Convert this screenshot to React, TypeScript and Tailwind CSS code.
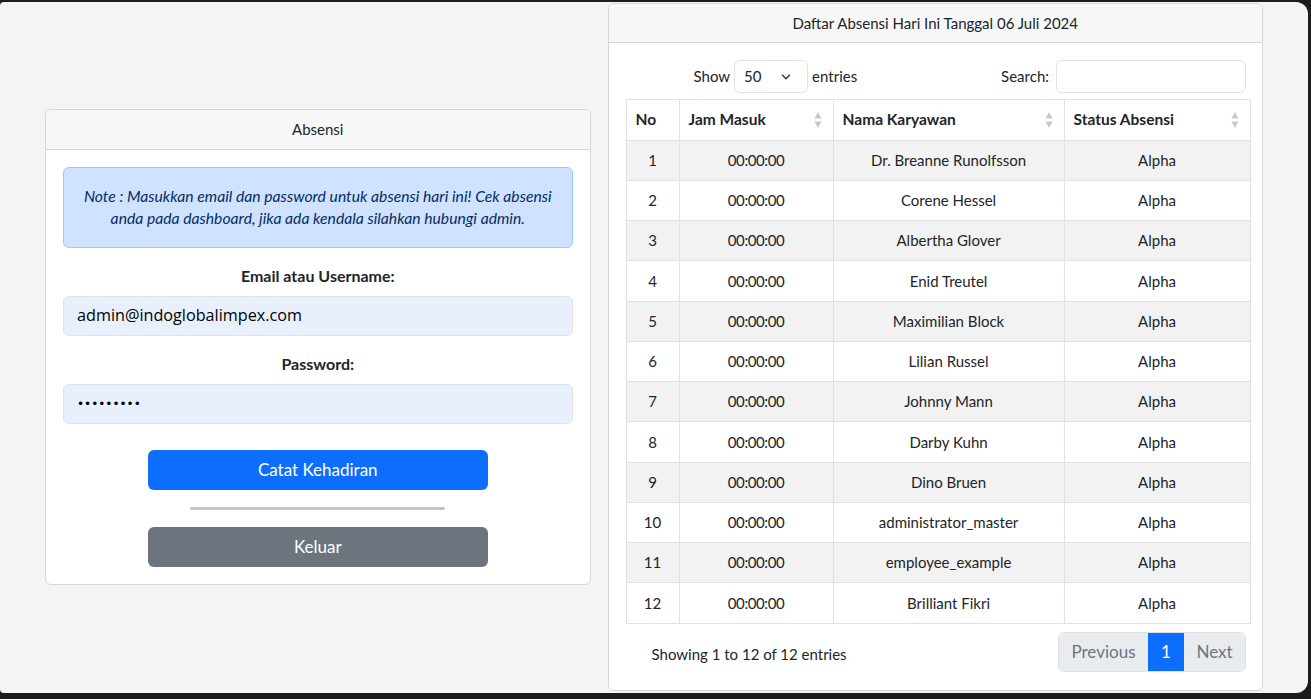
import { ChevronDown } from 'lucide-react';

const rows = [
  'Dr. Breanne Runolfsson',
  'Corene Hessel',
  'Albertha Glover',
  'Enid Treutel',
  'Maximilian Block',
  'Lilian Russel',
  'Johnny Mann',
  'Darby Kuhn',
  'Dino Bruen',
  'administrator_master',
  'employee_example',
  'Brilliant Fikri',
];

function SortIcon() {
  return (
    <svg className="w-[8px] h-[18px]" viewBox="0 0 8 18" fill="#c8c8c8">
      <path d="M4 1 L7.5 7.5 L0.5 7.5 Z" />
      <path d="M4 17 L7.5 10.5 L0.5 10.5 Z" />
    </svg>
  );
}

function AbsensiCard() {
  return (
    <div className="mb-[2px] w-[546px] bg-white border border-[#d6d6d6] rounded-[6px] overflow-hidden">
      <div className="h-[40px] flex items-center justify-center bg-[#f7f7f7] border-b border-[#d6d6d6] text-[15px] text-[#212529]">
        Absensi
      </div>
      <div className="px-[17px] pt-[17px] pb-[17px] flex flex-col">
        <div className="h-[81px] flex items-center justify-center px-4 bg-[#cfe2ff] border border-[#9ec5fe] rounded-[6px] text-center italic text-[15.7px] leading-[22px] text-[#052c65]">
          Note : Masukkan email dan password untuk absensi hari ini! Cek absensi anda pada dashboard, jika ada kendala silahkan hubungi admin.
        </div>
        <label className="mt-[17px] h-[22px] flex items-center justify-center font-bold text-[16px] text-[#212529]">
          Email atau Username:
        </label>
        <div className="mt-[9px] h-[40px] flex items-center px-[13px] bg-[#e8f0fe] border border-[#dee2e6] rounded-[6px] text-[16.2px] text-black font-['Open_Sans',sans-serif]">
          admin@indoglobalimpex.com
        </div>
        <label className="mt-[17px] h-[22px] flex items-center justify-center font-bold text-[16px] text-[#212529]">
          Password:
        </label>
        <div className="mt-[9px] h-[40px] flex items-center px-[13px] bg-[#e8f0fe] border border-[#dee2e6] rounded-[6px] text-[12px] text-black font-['DejaVu_Sans',sans-serif]">
          •••••••••
        </div>
        <button className="mt-[26px] self-center w-[340px] h-[40px] bg-[#0d6efd] rounded-[6px] text-white text-[17px]">
          Catat Kehadiran
        </button>
        <div className="mt-[17px] self-center w-[255px] h-[3px] bg-[#c4c4c4] rounded-full" />
        <button className="mt-[17px] self-center w-[340px] h-[40px] bg-[#6c757d] rounded-[6px] text-white text-[17px]">
          Keluar
        </button>
      </div>
    </div>
  );
}

function DaftarCard() {
  return (
    <div className="self-start mt-[1px] w-[656px] h-[688px] bg-white border border-[#d6d6d6] rounded-[6px] overflow-hidden flex flex-col">
      <div className="h-[39px] shrink-0 flex items-center justify-center bg-[#f7f7f7] border-b border-[#d6d6d6] text-[15px] text-[#212529]">
        Daftar Absensi Hari Ini Tanggal 06 Juli 2024
      </div>
      <div className="pt-[17px] pl-[17px] pr-[13px] flex flex-col text-[#212529]">
        {/* controls */}
        <div className="h-[33px] flex items-center text-[15px]">
          <div className="pl-[68px] flex items-center">
            <span>Show</span>
            <div className="ml-[4px] w-[74px] h-[33px] flex items-center justify-between pl-[9px] pr-[14px] border border-[#dee2e6] rounded-[6px]">
              <span>50</span>
              <ChevronDown className="w-[14px] h-[14px] text-[#343a40]" strokeWidth={2.5} />
            </div>
            <span className="ml-[4px]">entries</span>
          </div>
          <div className="ml-auto mr-[3px] flex items-center">
            <span>Search:</span>
            <div className="ml-[7px] w-[190px] h-[33px] border border-[#dee2e6] rounded-[6px]" />
          </div>
        </div>

        {/* table */}
        <table className="mt-[6px] w-[624px] border-collapse text-[15px] table-fixed">
          <colgroup>
            <col className="w-[53px]" />
            <col className="w-[154px]" />
            <col className="w-[231px]" />
            <col className="w-[186px]" />
          </colgroup>
          <thead>
            <tr className="h-[41px] text-[15.5px]">
              <th className="border border-[#dee2e6] text-left font-bold pl-[9px]">No</th>
              {['Jam Masuk', 'Nama Karyawan', 'Status Absensi'].map((h) => (
                <th key={h} className="border border-[#dee2e6] text-left font-bold pl-[9px] pr-[11px]">
                  <div className="flex items-center justify-between">
                    <span>{h}</span>
                    <SortIcon />
                  </div>
                </th>
              ))}
            </tr>
          </thead>
          <tbody>
            {rows.map((name, i) => (
              <tr
                key={name}
                className={`${i % 4 === 3 ? 'h-[41px]' : 'h-[40px]'} ${i % 2 === 0 ? 'bg-[#f2f2f2]' : 'bg-white'}`}
              >
                <td className="border border-[#dee2e6] text-center">{i + 1}</td>
                <td className="border border-[#dee2e6] text-center tracking-[-0.4px]">00:00:00</td>
                <td className="border border-[#dee2e6] text-center">{name}</td>
                <td className="border border-[#dee2e6] text-center">Alpha</td>
              </tr>
            ))}
          </tbody>
        </table>

        {/* footer */}
        <div className="mt-[8px] flex items-center">
          <span className="pl-[26px] pt-[4px] text-[15px]">Showing 1 to 12 of 12 entries</span>
          <div className="ml-auto mr-[3px] h-[40px] flex items-stretch rounded-[6px] overflow-hidden border border-[#dee2e6] text-[17px]">
            <div className="w-[89px] flex items-center justify-center bg-[#e9ecef] text-[#6c757d]">Previous</div>
            <div className="w-[36px] flex items-center justify-center bg-[#0d6efd] text-white">1</div>
            <div className="w-[61px] flex items-center justify-center bg-[#e9ecef] text-[#6c757d]">Next</div>
          </div>
        </div>
      </div>
    </div>
  );
}

export default function App() {
  return (
    <div className="w-[1311px] h-[699px] bg-[#1c1c1c] pt-[2px] font-['Lato',sans-serif]">
      <div className="w-[1308px] h-[691px] bg-[#f4f4f4] rounded-tl-[4px] rounded-bl-[4px] rounded-r-[12px] flex items-center gap-[17px] px-[45px]">
        <AbsensiCard />
        <DaftarCard />
      </div>
    </div>
  );
}
